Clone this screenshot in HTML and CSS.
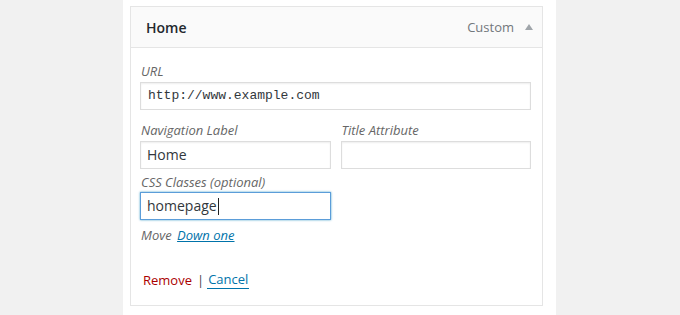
FILE: index.html
```html
<!DOCTYPE html>
<html lang="en">
<head>
    <meta charset="UTF-8">
    <title>Menu Item</title>
    <link rel="stylesheet" href="styles.css">
</head>
<body>
    <div class="column">
        <div class="menu-item">
            <!-- Cabeçalho do item -->
            <div class="item-bar">
                <span class="item-title">Home</span>
                <span class="item-type">Custom</span>
                <span class="item-arrow"></span>
            </div>

            <!-- Configurações -->
            <div class="item-settings">
                <p class="label url-label">URL</p>
                <div class="field mono">http://www.example.com</div>

                <div class="row">
                    <div class="half">
                        <p class="label">Navigation Label</p>
                        <div class="field">Home</div>
                    </div>
                    <div class="half">
                        <p class="label">Title Attribute</p>
                        <div class="field"></div>
                    </div>
                </div>

                <div class="half css-row">
                    <p class="label">CSS Classes (optional)</p>
                    <div class="field focus">homepage<span class="caret"></span></div>
                </div>

                <p class="move"><span class="label-inline">Move</span> <a href="#">Down one</a></p>

                <div class="actions">
                    <a href="#" class="remove">Remove</a>
                    <span class="sep">|</span>
                    <a href="#" class="cancel">Cancel</a>
                </div>
            </div>
        </div>
    </div>
</body>
</html>
```

FILE: styles.css
```css
/* Estilo Global */
body {
    margin: 0;
    padding: 0;
    background: #f1f1f1;
    font-family: 'Open Sans', 'Liberation Sans', sans-serif;
    font-size: 13px;
    color: #444;
}

.column {
    width: 433px;
    height: 315px;
    margin-left: 123px;
    padding: 6px 0 0 7px;
    box-sizing: border-box;
    background: #fff;
}

.menu-item {
    width: 413px;
    height: 300px;
    box-sizing: border-box;
    border: 1px solid #e5e5e5;
}

.item-bar {
    display: flex;
    align-items: center;
    height: 41px;
    box-sizing: border-box;
    padding: 0 9px 0 15px;
    background: #fafafa;
    border-bottom: 1px solid #e5e5e5;
}

.item-title {
    flex: 1;
    font-size: 14px;
    font-weight: 600;
    color: #23282d;
}

.item-type {
    color: #72777c;
    font-size: 13px;
}

.item-arrow {
    width: 0;
    height: 0;
    margin-left: 11px;
    border-left: 4px solid transparent;
    border-right: 4px solid transparent;
    border-bottom: 6px solid #a0a5aa;
}

.item-settings {
    padding: 14px 11px 0 9px;
}

.label {
    margin: 0 0 2px;
    padding-left: 1px;
    line-height: 18px;
    font-style: italic;
    color: #666;
}

.field {
    height: 28px;
    box-sizing: border-box;
    padding: 0 6px;
    border: 1px solid #ddd;
    box-shadow: inset 0 1px 2px rgba(0, 0, 0, 0.07);
    font-size: 14px;
    line-height: 26px;
    color: #32373c;
}

.field.mono {
    font-family: 'Liberation Mono', 'DejaVu Sans Mono', monospace;
    font-size: 13px;
    padding-left: 7px;
}

.field.focus {
    border-color: #5b9dd9;
    box-shadow: 0 0 2px rgba(30, 140, 190, 0.8);
}

.caret {
    display: inline-block;
    width: 1px;
    height: 17px;
    margin-left: 1px;
    vertical-align: -4px;
    background: #222;
}

.row {
    display: flex;
    gap: 10px;
    margin-top: 11px;
}

.half {
    width: 191px;
}

.css-row {
    margin-top: 4px;
}

.css-row .label {
    margin-bottom: 1px;
}

.move {
    margin: 6px 0 0;
    padding-left: 1px;
    line-height: 18px;
}

.label-inline {
    font-style: italic;
    color: #666;
    margin-right: 2px;
}

.move a {
    color: #0073aa;
    font-style: italic;
    text-decoration: underline;
}

.actions {
    margin-top: 26px;
    display: flex;
    align-items: center;
    line-height: 18px;
    font-size: 13px;
}

.remove {
    color: #a00;
    text-decoration: none;
    margin-left: 3px;
}

.sep {
    color: #444;
    margin: 0 3px 0 5px;
}

.cancel {
    color: #0073aa;
    text-decoration: none;
    border-bottom: 1px solid #0073aa;
    padding: 0 1px;
}
```
